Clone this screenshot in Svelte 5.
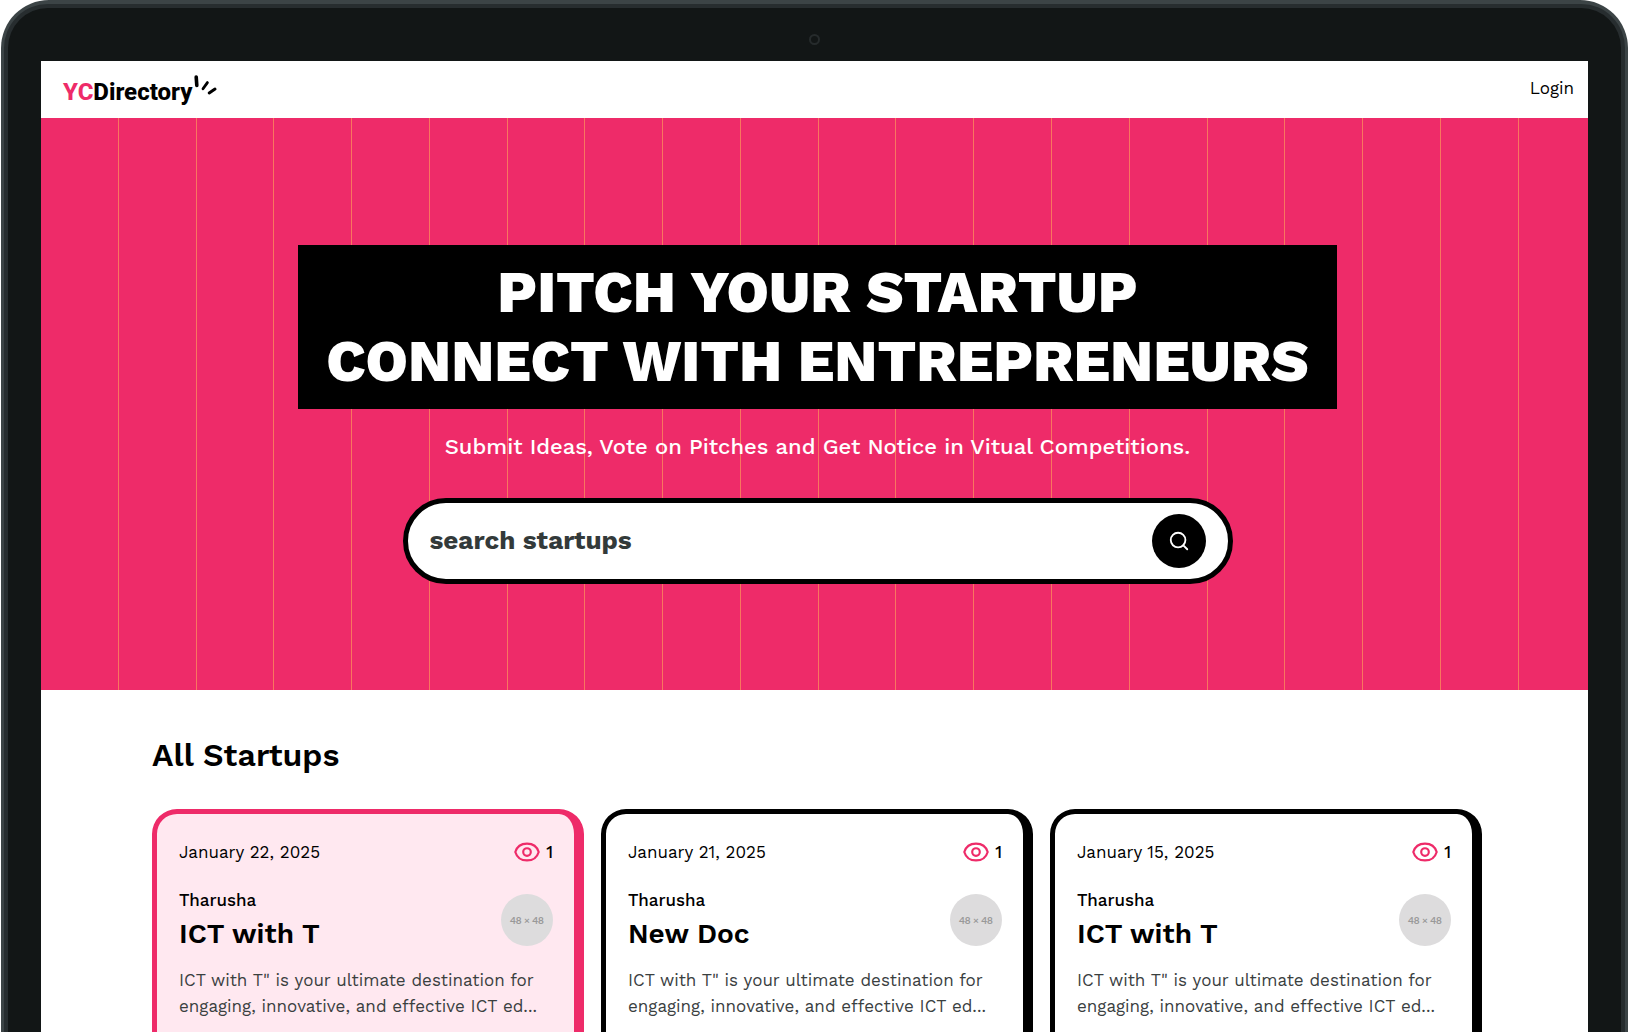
<script lang="ts">
	let query = "";
	const description =
		'ICT with T" is your ultimate destination for engaging, innovative, and effective ICT ed...';
	const startups = [
		{ date: "January 22, 2025", views: 1, author: "Tharusha", title: "ICT with T", active: true },
		{ date: "January 21, 2025", views: 1, author: "Tharusha", title: "New Doc", active: false },
		{ date: "January 15, 2025", views: 1, author: "Tharusha", title: "ICT with T", active: false }
	];
</script>

<div class="laptop">
	<div class="laptop__bezel">
		<div class="laptop__top"><span class="laptop__camera"></span></div>
		<div class="screen">
			<header class="nav">
				<a class="logo" href="/" aria-label="YCDirectory">
					<span class="logo__yc">YC</span><span>Directory</span>
					<svg class="logo__rays" viewBox="0 0 24 20" aria-hidden="true">
						<path d="M4.2 2 L4.8 10.4" stroke-width="3.6" />
						<path d="M15.4 7.6 L11 13.800" stroke-width="2.8" />
						<path d="M23 14 L17.200 18" stroke-width="3" />
					</svg>
				</a>
				<a class="login" href="/login">Login</a>
			</header>

			<section class="hero">
				<h1>Pitch your startup<br />connect with entrepreneurs</h1>
				<p>Submit Ideas, Vote on Pitches and Get Notice in Vitual Competitions.</p>
				<form class="search" on:submit|preventDefault>
					<input
						type="text"
						name="query"
						aria-label="search startups"
						placeholder="search startups"
						bind:value={query}
					/>
					<button type="submit" aria-label="Search">
						<svg viewBox="0 0 24 24" aria-hidden="true">
							<circle cx="11" cy="11" r="8" />
							<path d="m21 21-4.3-4.3" />
						</svg>
					</button>
				</form>
			</section>

			<main class="startups">
				<h2>All Startups</h2>
				<ul class="startups__grid">
					{#each startups as startup}
						<li class="card" class:card--active={startup.active}>
							<div class="card__row">
								<span class="card__date">{startup.date}</span>
								<span class="card__views">
									<svg viewBox="0 0 24 24" aria-hidden="true">
										<path
											d="M1.2 12C2.6 7.2 6.8 4.2 12 4.2S21.4 7.2 22.8 12C21.4 16.8 17.2 19.8 12 19.8S2.6 16.8 1.2 12Z"
										/>
										<circle cx="12" cy="12" r="3.5" />
									</svg>
									{startup.views}
								</span>
							</div>
							<div class="card__row card__row--main">
								<div>
									<p class="card__author">{startup.author}</p>
									<h3>{startup.title}</h3>
								</div>
								<span class="card__avatar">48 × 48</span>
							</div>
							<p class="card__description">{description}</p>
							<div class="card__image"></div>
						</li>
					{/each}
				</ul>
			</main>
		</div>
	</div>
</div>

<style>
	:global(body) {
		background: #fff;
		font-family: "Work Sans", Inter, "Liberation Sans", sans-serif;
	}
	h1,
	h2,
	h3,
	p,
	ul {
		margin: 0;
		padding: 0;
	}
	a {
		color: #000;
		text-decoration: none;
	}
	.laptop {
		box-sizing: border-box;
		height: 100vh;
		margin: 0 1px;
		overflow: hidden;
		padding: 4px 3px 0;
		background: #3c4446;
		border-radius: 48px 48px 0 0;
	}
	.laptop__bezel {
		padding: 0 33px;
		background: #121616;
		border: 4px solid #272d2f;
		border-bottom: 0;
		border-radius: 44px 44px 0 0;
	}
	.laptop__top {
		height: 53px;
		display: flex;
		align-items: center;
		justify-content: center;
	}
	.laptop__camera {
		width: 7px;
		height: 7px;
		margin-top: 10px;
		border: 2px solid #262b2c;
		border-radius: 50%;
	}
	.screen {
		background: #fff;
	}

	.nav {
		height: 57px;
		padding: 0 14px 0 22px;
		display: flex;
		align-items: center;
		justify-content: space-between;
	}
	.logo {
		display: flex;
		align-items: center;
		padding-top: 4px;
		font-family: Roboto, sans-serif;
		font-size: 24px;
		font-weight: 800;
	}
	.logo__yc {
		color: #ee2b69;
	}
	.logo__rays {
		width: 24px;
		height: 20px;
		margin-bottom: 14px;
		overflow: visible;
		fill: none;
		stroke: #000;
		stroke-linecap: round;
	}
	.login {
		padding-bottom: 4px;
		font-size: 17px;
	}

	.hero {
		padding: 127px 0 106px 6px;
		display: flex;
		flex-direction: column;
		align-items: center;
		background: repeating-linear-gradient(
				to right,
				transparent 0,
				transparent calc(5.027% - 1px),
				#f8765f calc(5.027% - 1px),
				#f8765f 5.027%
			)
			#ee2b69;
		color: #fff;
	}
	h1 {
		padding: 13px 28px;
		background: #000;
		font-size: 58px;
		font-weight: 800;
		line-height: 69px;
		text-align: center;
		text-transform: uppercase;
	}
	.hero p {
		margin-top: 23px;
		font-size: 22px;
		font-weight: 500;
		line-height: 30px;
	}
	.search {
		box-sizing: border-box;
		width: 830px;
		max-width: 90%;
		height: 86px;
		margin-top: 36px;
		padding: 0 22px;
		display: flex;
		align-items: center;
		background: #fff;
		border: 5px solid #000;
		border-radius: 43px;
	}
	.search input {
		flex: 1;
		min-width: 0;
		padding: 0 0 2px;
		background: none;
		border: 0;
		outline: 0;
		color: #333a3a;
		font: inherit;
		font-size: 26px;
		font-weight: 700;
	}
	.search input::placeholder {
		color: #333a3a;
		opacity: 1;
	}
	.search button {
		width: 54px;
		height: 54px;
		padding: 0;
		display: flex;
		align-items: center;
		justify-content: center;
		background: #000;
		border: 0;
		border-radius: 50%;
	}
	.search svg {
		width: 22px;
		height: 22px;
		fill: none;
		stroke: #fff;
		stroke-width: 2;
		stroke-linecap: round;
	}

	.startups {
		padding: 45px 106px 60px 111px;
	}
	h2 {
		font-size: 32px;
		font-weight: 600;
		line-height: 40px;
	}
	.startups__grid {
		margin-top: 34px;
		display: grid;
		grid-template-columns: repeat(3, 1fr);
		gap: 17px;
		list-style: none;
	}
	.card {
		padding: 26px 21px 26px 22px;
		background: #fff;
		border: 5px solid #000;
		border-right-width: 10px;
		border-radius: 25px;
	}
	.card--active {
		background: #ffe8f0;
		border-color: #ee2b69;
	}
	.card__row {
		display: flex;
		align-items: center;
		justify-content: space-between;
	}
	.card__row--main {
		margin-top: 24px;
	}
	.card__date,
	.card__views,
	.card__author {
		font-size: 17px;
		font-weight: 500;
		line-height: 24px;
	}
	.card__date {
		font-weight: 400;
	}
	.card__views {
		display: flex;
		align-items: center;
		gap: 6px;
	}
	.card__views svg {
		width: 26px;
		height: 26px;
		margin: -1px 0;
		fill: none;
		stroke: #ee2b69;
		stroke-width: 2;
	}
	h3 {
		margin-top: 4px;
		font-size: 28px;
		font-weight: 600;
		line-height: 36px;
	}
	.card__avatar {
		width: 52px;
		height: 52px;
		display: flex;
		align-items: center;
		justify-content: center;
		background: #dddcdd;
		border-radius: 50%;
		color: #999;
		font-family: Lato, sans-serif;
		font-size: 10px;
		font-weight: 700;
	}
	.card__description {
		margin-top: 15px;
		color: #3a403f;
		font-size: 17px;
		line-height: 26px;
	}
	.card__image {
		height: 164px;
		margin-top: 14px;
		background: #dddcdd;
		border-radius: 10px;
	}
</style>
